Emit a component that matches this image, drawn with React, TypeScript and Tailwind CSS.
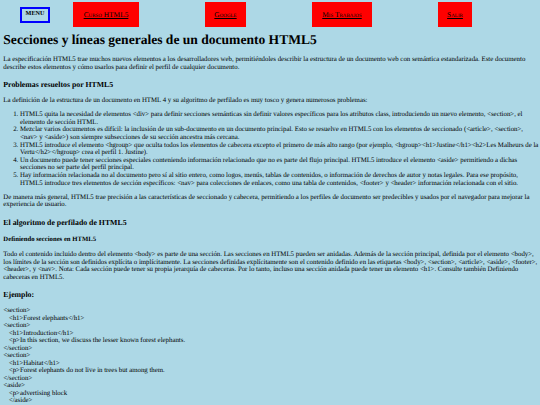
const LINKS = [
  { label: "Curso HTML5", box: "w-[66px] ml-[23px]" },
  { label: "Google", box: "w-[41px] ml-[66px]" },
  { label: "Mis Trabajos", box: "w-[60px] ml-[66px]" },
  { label: "Salir", box: "w-[34px] ml-[66px]" },
];

const ITEMS = [
  "HTML5 quita la necesidad de elementos <div> para definir secciones semánticas sin definir valores específicos para los atributos class, introduciendo un nuevo elemento, <section>, el elemento de sección HTML.",
  "Mezclar varios documentos es difícil: la inclusión de un sub-documento en un documento principal. Esto se resuelve en HTML5 con los elementos de seccionado (<article>, <section>, <nav> y <aside>) son siempre subsecciones de su sección ancestra más cercana.",
  "HTML5 introduce el elemento <hgroup> que oculta todos los elementos de cabecera excepto el primero de más alto rango (por ejemplo, <hgroup><h1>Justine</h1><h2>Les Malheurs de la Vertu</h2></hgroup> crea el perfil 1. Justine).",
  "Un documento puede tener secciones especiales conteniendo información relacionado que no es parte del flujo principal. HTML5 introduce el elemento <aside> permitiendo a dichas secciones no ser parte del perfil principal.",
  "Hay información relacionada no al documento pero sí al sitio entero, como logos, menús, tablas de contenidos, o información de derechos de autor y notas legales. Para ese propósito, HTML5 introduce tres elementos de sección específicos: <nav> para colecciones de enlaces, como una tabla de contenidos, <footer> y <header> información relacionada con el sitio.",
];

const CODE = [
  { text: "<section>", indent: false },
  { text: "<h1>Forest elephants</h1>", indent: true },
  { text: "<section>", indent: false },
  { text: "<h1>Introduction</h1>", indent: true },
  { text: "<p>In this section, we discuss the lesser known forest elephants.", indent: true },
  { text: "</section>", indent: false },
  { text: "<section>", indent: false },
  { text: "<h1>Habitat</h1>", indent: true },
  { text: "<p>Forest elephants do not live in trees but among them.", indent: true },
  { text: "</section>", indent: false },
  { text: "<aside>", indent: false },
  { text: "<p>advertising block", indent: true },
  { text: "</aside>", indent: true },
];

export default function App() {
  return (
    <div className="h-[405px] w-[540px] overflow-hidden bg-[#add8e6] font-['Liberation_Serif',serif] text-[6.83px] leading-[7.6px] text-black [text-rendering:geometricPrecision]">
      {/* Nav */}
      <nav className="flex items-start pl-[20px] pt-[2px]">
        <div className="mt-[5px] flex h-[16px] w-[30px] justify-center border-2 border-[#0000ff] pt-[1px] text-[6.2px] font-bold">
          MENU
        </div>
        {LINKS.map((link) => (
          <div key={link.label} className={`flex h-[25px] items-center justify-center bg-[#ff0000] ${link.box}`}>
            <a href="#" className="text-[7.4px] [font-variant:small-caps] underline">
              {link.label}
            </a>
          </div>
        ))}
      </nav>

      <main className="w-[539px] pl-[3.33px]">
        <h1 className="mt-[5px] text-[13.55px] leading-[15.3px] font-bold">
          Secciones y líneas generales de un documento HTML5
        </h1>

        <p className="mt-[9px]">
          La especificación HTML5 trae muchos nuevos elementos a los desarrolladores web, permitiéndoles describir la estructura de un documento web con semántica estandarizada. Este documento describe estos elementos y cómo usarlos para definir el perfil de cualquier documento.
        </p>

        <h3 className="mt-[9px] text-[7.8px] leading-[9px] font-bold">Problemas resueltos por HTML5</h3>

        <p className="mt-[7.5px]">
          La definición de la estructura de un documento en HTML 4 y su algoritmo de perfilado es muy tosco y genera numerosos problemas:
        </p>

        <ol className="mt-[6.67px] list-decimal pl-[16.67px]">
          {ITEMS.map((item) => (
            <li key={item}>{item}</li>
          ))}
        </ol>

        <p className="mt-[6.67px]">
          De manera más general, HTML5 trae precisión a las características de seccionado y cabecera, permitiendo a los perfiles de documento ser predecibles y usados por el navegador para mejorar la experiencia de usuario.
        </p>

        <h3 className="mt-[9px] text-[7.8px] leading-[9px] font-bold">El algoritmo de perfilado de HTML5</h3>

        <h4 className="mt-[8.5px] text-[6.7px] font-bold">Definiendo secciones en HTML5</h4>

        <p className="mt-[8px]">
          Todo el contenido incluido dentro del elemento &lt;body&gt; es parte de una sección. Las secciones en HTML5 pueden ser anidadas. Además de la sección principal, definida por el elemento &lt;body&gt;, los límites de la sección son definidos explícita o implícitamente. La secciones definidas explícitamente son el contenido definido en las etiquetas &lt;body&gt;, &lt;section&gt;, &lt;article&gt;, &lt;aside&gt;, &lt;footer&gt;, &lt;header&gt;, y &lt;nav&gt;. Nota: Cada sección puede tener su propia jerarquía de cabeceras. Por lo tanto, incluso una sección anidada puede tener un elemento &lt;h1&gt;. Consulte también Definiendo cabeceras en HTML5.
        </p>

        <h3 className="mt-[9px] text-[7.8px] leading-[9px] font-bold">Ejemplo:</h3>

        {/* Code sample */}
        <div className="mt-[8px] leading-[7.5px]">
          {CODE.map((line, i) => (
            <div key={i} className={line.indent ? "pl-[5.5px]" : ""}>
              {line.text}
            </div>
          ))}
        </div>
      </main>
    </div>
  );
}
